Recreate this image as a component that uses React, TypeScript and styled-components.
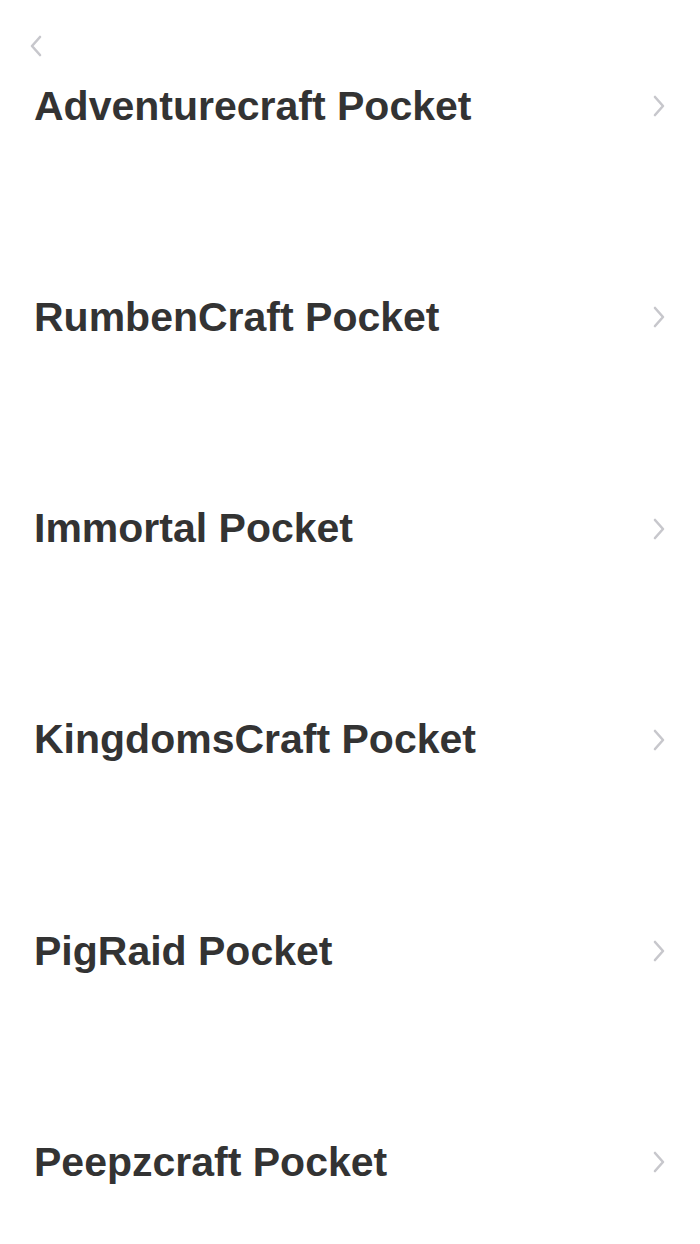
import React, { FC } from 'react';
import styled, { createGlobalStyle } from 'styled-components';

// Styles
const GlobalStyle = createGlobalStyle`
  html, body {
    margin: 0;
    padding: 0;
    background: #ffffff;
  }

  body {
    font-family: "Liberation Sans", Arial, sans-serif;
  }
`;

const Page = styled.div`
  width: 700px;
  height: 1244px;
  overflow: hidden;
  background: #ffffff;
`;

const Header = styled.header`
  display: flex;
  align-items: flex-start;
  height: 70px;
  padding: 34px 0 0 28px;
  box-sizing: border-box;
`;

const BackButton = styled.button`
  display: flex;
  padding: 0;
  border: none;
  background: none;
  cursor: pointer;
`;

const List = styled.ul`
  margin: 0;
  padding: 0;
  list-style: none;
`;

const Row = styled.li`
  display: flex;
  align-items: flex-start;
  height: 211.3px;

  &:last-child {
    height: 120px;
  }
`;

const Line = styled.div`
  display: flex;
  align-items: center;
  justify-content: space-between;
  width: 100%;
  height: 72px;
  padding: 0 33px 0 34px;
  box-sizing: border-box;
`;

const Title = styled.span`
  font-size: 41px;
  font-weight: 700;
  color: #333333;
  letter-spacing: 0;
`;

// Icons
const Chevron: FC<{ left?: boolean }> = ({ left }) => (
  <svg width="16" height="24" viewBox="0 0 16 24" fill="none">
    <path
      d={left ? 'M12 3 L4 12 L12 21' : 'M4 3 L12 12 L4 21'}
      stroke="#c7c7cc"
      strokeWidth="2.6"
      strokeLinecap="round"
      strokeLinejoin="round"
    />
  </svg>
);

const servers = [
  'Adventurecraft Pocket',
  'RumbenCraft Pocket',
  'Immortal Pocket',
  'KingdomsCraft Pocket',
  'PigRaid Pocket',
  'Peepzcraft Pocket',
];

// Component
const App: FC = () => (
  <Page>
    <GlobalStyle />
    <Header>
      <BackButton>
        <Chevron left />
      </BackButton>
    </Header>
    <List>
      {servers.map((name) => (
        <Row key={name}>
          <Line>
            <Title>{name}</Title>
            <Chevron />
          </Line>
        </Row>
      ))}
    </List>
  </Page>
);

export default App;
